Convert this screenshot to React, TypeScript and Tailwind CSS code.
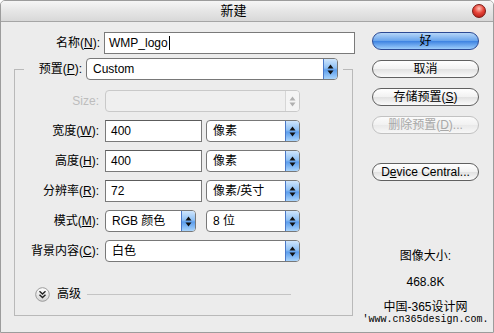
import type { ReactNode } from "react";

function Arrows({ muted }: { muted?: boolean }) {
  const c = muted ? "#b0b0b0" : "#111";
  return (
    <svg width="7" height="11" viewBox="0 0 7 11" aria-hidden="true">
      <path d="M3.5 0.5 L6.5 4.5 L0.5 4.5 Z" fill={c} />
      <path d="M0.5 6.5 L6.5 6.5 L3.5 10.5 Z" fill={c} />
    </svg>
  );
}

function Select({ value, width, disabled }: { value?: string; width: string; disabled?: boolean }) {
  return (
    <div
      className={`flex h-[22px] ${width} items-stretch overflow-hidden rounded-[4px] border ${
        disabled ? "border-[#c9c9c9] bg-[#efefef]" : "border-[#787878] bg-white"
      }`}
    >
      <div className="flex flex-1 items-center pl-[6px] text-[12px] text-black">{value}</div>
      {disabled ? (
        <div className="flex w-[14px] items-center justify-center border-l border-[#d6d6d6] bg-[#f4f4f4]">
          <Arrows muted />
        </div>
      ) : (
        <div className="flex w-[14px] items-center justify-center border-l border-[#4a78c8] bg-[linear-gradient(#cfe6fd,#8fc0f4_45%,#5b9ded_55%,#a9d4fb)]">
          <Arrows />
        </div>
      )}
    </div>
  );
}

function TextInput({ value, width }: { value: string; width: string }) {
  return (
    <div
      className={`flex h-[22px] ${width} items-center border border-[#7a7a7a] border-t-[#5c5c5c] bg-white pl-[5px] text-[12px] text-black`}
    >
      {value}
    </div>
  );
}

function AquaButton({ children, primary, disabled }: { children: ReactNode; primary?: boolean; disabled?: boolean }) {
  const tone = primary
    ? "border-[#2c4a94] bg-[linear-gradient(#b6d6f8,#6aa5ec_48%,#3f84e2_52%,#9dcdfb)] text-black"
    : disabled
      ? "border-[#c2c2c2] bg-[linear-gradient(#fbfbfb,#f1f1f1_50%,#e9e9e9_51%,#f7f7f7)] text-[#a8a8a8]"
      : "border-[#606060] bg-[linear-gradient(#ffffff,#f2f2f2_48%,#e2e2e2_52%,#fafafa)] text-black";
  return (
    <div className={`flex h-[18px] w-full items-center justify-center rounded-full border ${tone} text-[12px]`}>
      {children}
    </div>
  );
}

function Row({ label, children, muted }: { label: ReactNode; children: ReactNode; muted?: boolean }) {
  return (
    <div className="flex h-[22px] items-center">
      <div className={`w-[85px] pr-[1px] text-right text-[12px] ${muted ? "text-[#bdbdbd]" : "text-black"}`}>
        {label}
      </div>
      <div className="ml-[5px] flex items-center gap-[4px]">{children}</div>
    </div>
  );
}

export default function App() {
  return (
    <div className="h-[333px] w-[494px] overflow-hidden rounded-t-[5px] border border-[#9c9c9c] bg-[#ececec] font-['Liberation_Sans','Noto_Sans_CJK_SC',sans-serif] text-black">
      {/* 标题栏 */}
      <div className="flex h-[21px] items-center border-b border-[#a5a5a5] bg-[linear-gradient(#f6f6f6,#e6e6e6_50%,#d8d8d8)]">
        <div className="flex-1 pl-[4px] text-center text-[13px]">新建</div>
        <div className="mr-[7px] ml-[10px] h-[14px] w-[14px] rounded-full border border-[#7c1a14] bg-[radial-gradient(circle_at_50%_30%,#ffc4b8,#e8453a_45%,#a3130d)]" />
      </div>

      <div className="flex pt-[10px]">
        {/* 左侧表单 */}
        <div className="w-[355px]">
          <div className="flex h-[22px] items-center">
            <div className="w-[99px] text-right text-[12px]">
              名称(<span className="underline">N</span>):
            </div>
            <div className="ml-[4px] flex h-[22px] w-[251px] items-center border border-[#7a7a7a] bg-white pl-[4px] text-[12px]">
              WMP_logo
              <span className="ml-[1px] inline-block h-[14px] w-px bg-black" />
            </div>
          </div>

          <fieldset className="mt-[4px] ml-[13px] h-[258px] w-[339px] border border-[#b9b9b9] px-0 pb-0">
            <legend className="ml-[9px] flex items-center pr-[5px]">
              <span className="w-[58px] text-right text-[12px]">
                预置(<span className="underline">P</span>):
              </span>
              <div className="ml-[4px]">
                <Select value="Custom" width="w-[252px]" />
              </div>
            </legend>

            <div className="flex flex-col gap-[8px] pt-[10px]">
              <Row label="Size:" muted>
                <Select width="w-[195px]" disabled />
              </Row>
              <Row label={<>宽度(<span className="underline">W</span>):</>}>
                <TextInput value="400" width="w-[97px]" />
                <Select value="像素" width="w-[94px]" />
              </Row>
              <Row label={<>高度(<span className="underline">H</span>):</>}>
                <TextInput value="400" width="w-[97px]" />
                <Select value="像素" width="w-[94px]" />
              </Row>
              <Row label={<>分辨率(<span className="underline">R</span>):</>}>
                <TextInput value="72" width="w-[97px]" />
                <Select value="像素/英寸" width="w-[94px]" />
              </Row>
              <Row label={<>模式(<span className="underline">M</span>):</>}>
                <Select value="RGB 颜色" width="w-[91px]" />
                <div className="ml-[6px]">
                  <Select value="8 位" width="w-[94px]" />
                </div>
              </Row>
              <Row label={<>背景内容(<span className="underline">C</span>):</>}>
                <Select value="白色" width="w-[195px]" />
              </Row>
            </div>

            {/* 高级 */}
            <div className="mt-[23px] flex items-center pl-[20px]">
              <svg width="15" height="15" viewBox="0 0 15 15" aria-hidden="true">
                <defs>
                  <linearGradient id="adv" x1="0" y1="0" x2="0" y2="1">
                    <stop offset="0" stopColor="#ffffff" />
                    <stop offset="1" stopColor="#d4d4d4" />
                  </linearGradient>
                </defs>
                <circle cx="7.5" cy="7.5" r="6.8" fill="url(#adv)" stroke="#9a9a9a" />
                <path d="M4.5 4.2 L7.5 7 L10.5 4.2" fill="none" stroke="#222" strokeWidth="1.4" />
                <path d="M4.5 7.7 L7.5 10.5 L10.5 7.7" fill="none" stroke="#222" strokeWidth="1.4" />
              </svg>
              <span className="ml-[7px] text-[12px]">高级</span>
              <div className="ml-[6px] h-px w-[204px] bg-[#c4c4c4]" />
            </div>
          </fieldset>
        </div>

        {/* 右侧按钮 */}
        <div className="ml-[16px] flex w-[107px] flex-col items-center">
          <div className="flex w-full flex-col gap-[10px]">
            <AquaButton primary>好</AquaButton>
            <AquaButton>取消</AquaButton>
            <AquaButton>
              存储预置(<span className="underline">S</span>)
            </AquaButton>
            <AquaButton disabled>
              删除预置(<span className="underline">D</span>)...
            </AquaButton>
          </div>
          <div className="mt-[29px] w-full">
            <AquaButton>
              D<span className="underline">e</span>vice Central...
            </AquaButton>
          </div>

          <div className="mt-[68px] text-[12px] leading-[14px]">图像大小:</div>
          <div className="mt-[12px] text-[12px] leading-[14px]">468.8K</div>
          <div className="mt-[11px] text-[12px] leading-[14px]">中国-365设计网</div>
          <div className="whitespace-nowrap font-['Liberation_Mono',monospace] text-[10px] leading-[12px]">
            'www.cn365design.com.
          </div>
        </div>
      </div>
    </div>
  );
}
